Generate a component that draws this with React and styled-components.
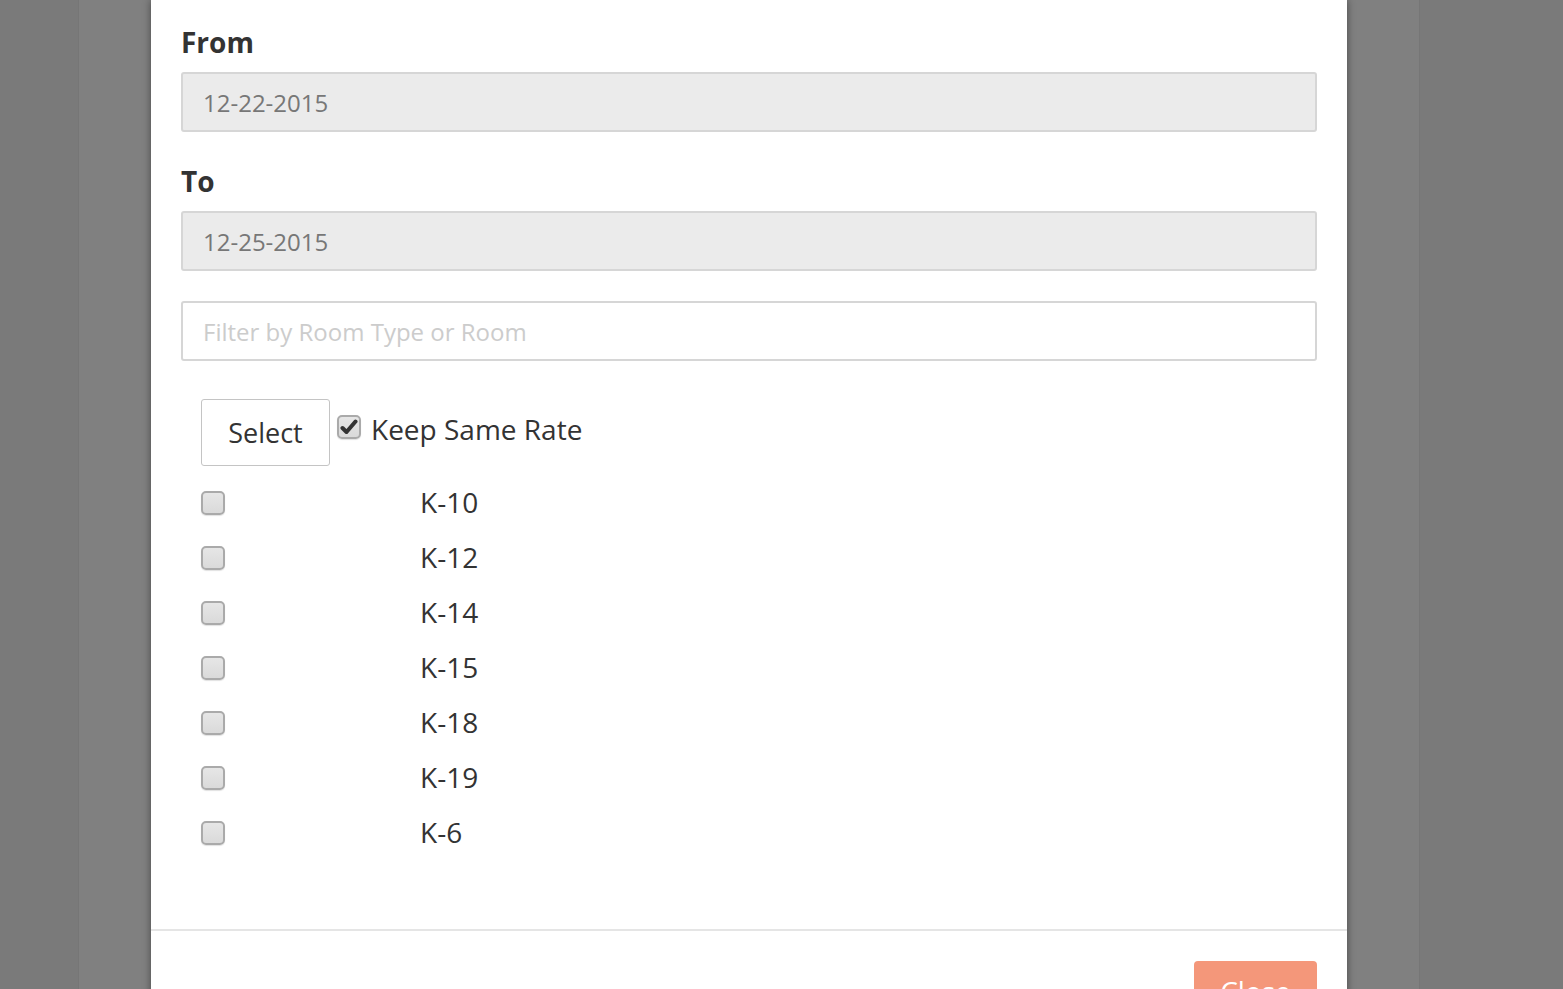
import React from 'react';
import styled, { createGlobalStyle } from 'styled-components';

const GlobalStyle = createGlobalStyle`
    html, body {
        margin: 0;
        padding: 0;
        background: #7a7a7a;
        font-family: "Open Sans", "Liberation Sans", sans-serif;
        overflow: hidden;
    }
`;

const Page = styled.div`
    height: 989px;
    width: 1563px;
    overflow: hidden;
`;

const Container = styled.div`
    margin-left: 78px;
    width: 1340px;
    height: 100%;
    background: #808080;
    border-left: 1px solid #767676;
    border-right: 1px solid #767676;
    display: flex;
    justify-content: center;
`;

const Modal = styled.div`
    width: 1196px;
    background: #ffffff;
    box-shadow: 0 0 8px rgba(0, 0, 0, 0.45);
    display: flex;
    flex-direction: column;
    align-self: flex-start;
`;

const Body = styled.div`
    padding: 22px 30px 70px;
    border-bottom: 2px solid #e5e5e5;
`;

const Label = styled.label`
    display: block;
    font-size: 28px;
    line-height: 40px;
    font-weight: 700;
    color: #333333;
    margin: ${p => p.first ? '0' : '29px'} 0 10px;
`;

const Input = styled.input`
    display: block;
    box-sizing: border-box;
    width: 100%;
    height: 60px;
    padding: 0 20px;
    font-family: inherit;
    font-size: 24px;
    color: ${p => p.readOnly ? '#777777' : '#333333'};
    background: ${p => p.readOnly ? '#ebebeb' : '#ffffff'};
    border: 2px solid #d6d6d6;
    border-radius: 3px;
    outline: none;
    margin-top: ${p => p.gap || 0}px;

    &::placeholder {
        color: #cccccc;
    }
`;

const RoomArea = styled.div`
    padding-left: 20px;
    margin-top: 38px;
`;

const Toolbar = styled.div`
    display: flex;
    align-items: flex-start;
    gap: 7px;
    margin-bottom: 8px;
`;

const SelectButton = styled.button`
    width: 129px;
    height: 67px;
    box-sizing: border-box;
    background: #ffffff;
    border: 1px solid #c4c4c4;
    border-radius: 3px;
    font-family: inherit;
    font-size: 27px;
    color: #333333;
`;

const KeepRate = styled.label`
    display: flex;
    align-items: center;
    gap: 10px;
    margin-top: 12px;
    font-size: 28px;
    line-height: 36px;
    color: #333333;
`;

const Box = styled.span`
    display: inline-flex;
    align-items: center;
    justify-content: center;
    box-sizing: border-box;
    width: 24px;
    height: 24px;
    border: 2px solid #aaaaaa;
    border-radius: 5px;
    background: linear-gradient(#e6e6e6, #dadada);
    box-shadow: 0 1px 1px rgba(0, 0, 0, 0.12);
    flex-shrink: 0;
    margin-top: ${p => p.offset || 0}px;
`;

const RoomList = styled.div`
    display: flex;
    flex-direction: column;
`;

const RoomRow = styled.div`
    display: grid;
    grid-template-columns: 219px 1fr;
    align-items: center;
    height: 55px;
    font-size: 28px;
    color: #333333;
`;

const Footer = styled.div`
    display: flex;
    justify-content: flex-end;
    padding: 30px 30px 0;
    height: 60px;
    overflow: hidden;
`;

const CloseButton = styled.button`
    width: 123px;
    height: 60px;
    background: #f4977a;
    border: none;
    border-radius: 4px;
    color: #ffffff;
    font-family: inherit;
    font-size: 28px;
    padding: 0;
`;

const Check = () => (
    <svg width="18" height="18" viewBox="0 0 18 18">
        <path d="M2.5 10 L6.5 14 L15.5 3.5" fill="none" stroke="#333" strokeWidth="4" strokeLinecap="round" strokeLinejoin="round" />
    </svg>
);

const rooms = ['K-10', 'K-12', 'K-14', 'K-15', 'K-18', 'K-19', 'K-6'];

export default function App() {
    return (
        <Page>
            <GlobalStyle />
            <Container>
                <Modal>
                    <Body>
                        <Label first>From</Label>
                        <Input readOnly value="12-22-2015" />
                        <Label>To</Label>
                        <Input readOnly value="12-25-2015" />
                        <Input gap={30} placeholder="Filter by Room Type or Room" />

                        <RoomArea>
                            <Toolbar>
                                <SelectButton>Select</SelectButton>
                                <KeepRate>
                                    <Box offset={-4}><Check /></Box>
                                    Keep Same Rate
                                </KeepRate>
                            </Toolbar>
                            <RoomList>
                                {rooms.map(room => (
                                    <RoomRow key={room}>
                                        <Box offset={3} />
                                        <span>{room}</span>
                                    </RoomRow>
                                ))}
                            </RoomList>
                        </RoomArea>
                    </Body>
                    <Footer>
                        <CloseButton>Close</CloseButton>
                    </Footer>
                </Modal>
            </Container>
        </Page>
    );
}
